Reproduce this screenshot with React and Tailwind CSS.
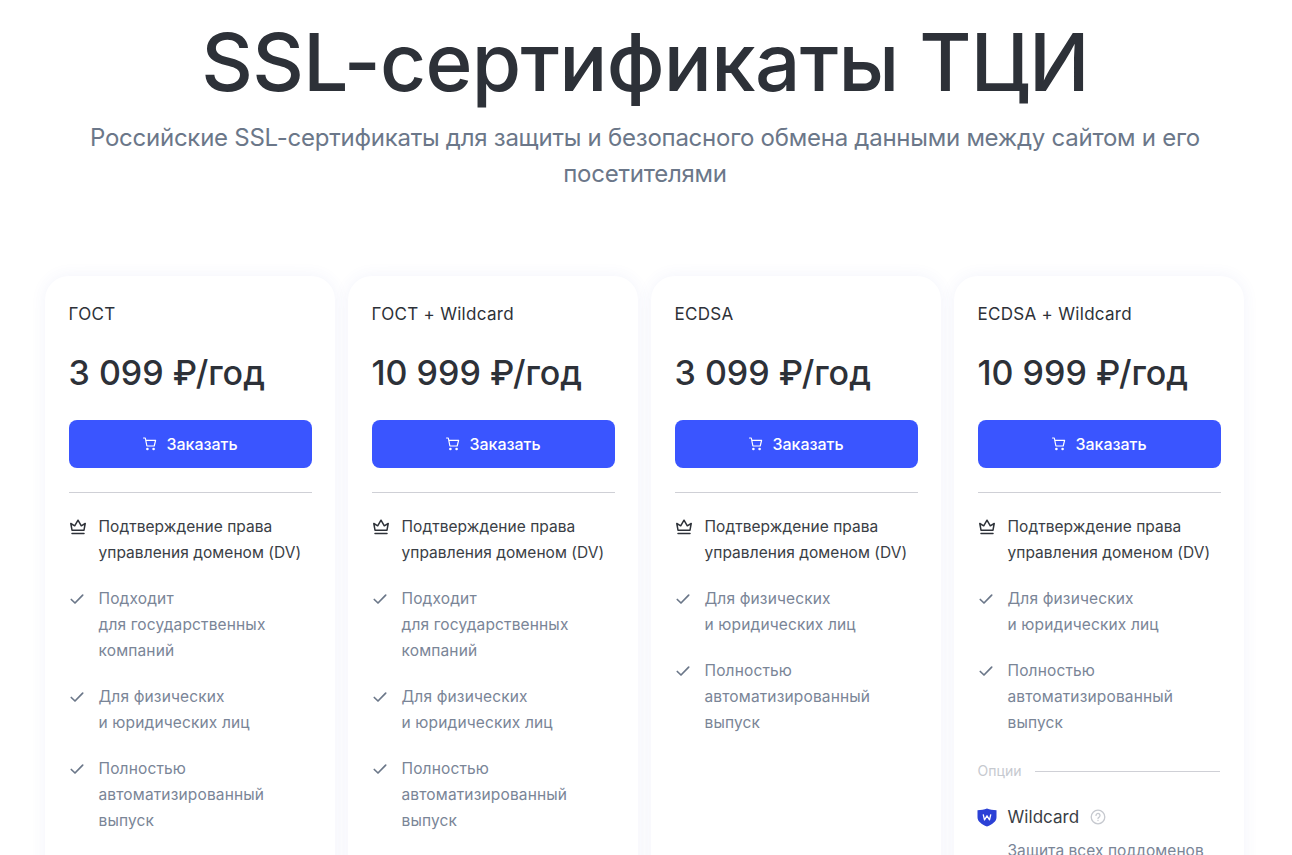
import React from 'react';

const plans = [
    {
        name: 'ГОСТ',
        price: '3 099 ₽/год',
        features: [
            ['Подходит', 'для государственных', 'компаний'],
            ['Для физических', 'и юридических лиц'],
            ['Полностью', 'автоматизированный', 'выпуск'],
        ],
    },
    {
        name: 'ГОСТ + Wildcard',
        price: '10 999 ₽/год',
        features: [
            ['Подходит', 'для государственных', 'компаний'],
            ['Для физических', 'и юридических лиц'],
            ['Полностью', 'автоматизированный', 'выпуск'],
        ],
    },
    {
        name: 'ECDSA',
        price: '3 099 ₽/год',
        features: [
            ['Для физических', 'и юридических лиц'],
            ['Полностью', 'автоматизированный', 'выпуск'],
        ],
    },
    {
        name: 'ECDSA + Wildcard',
        price: '10 999 ₽/год',
        features: [
            ['Для физических', 'и юридических лиц'],
            ['Полностью', 'автоматизированный', 'выпуск'],
        ],
        options: true,
    },
];

const CartIcon = () => (
    <svg width="16" height="16" viewBox="0 0 16 16" fill="none" stroke="currentColor" strokeWidth="1.2" strokeLinecap="round" strokeLinejoin="round">
        <path d="M1.500 2h1.800l1.600 8h7.300l1.400-5.700H3.800" />
        <circle cx="5.400" cy="13" r="0.700" />
        <circle cx="11.600" cy="13" r="0.700" />
    </svg>
);

const CrownIcon = () => (
    <svg width="18" height="18" viewBox="0 0 18 18" fill="none" stroke="#2d3138" strokeWidth="1.500" strokeLinejoin="round" strokeLinecap="round">
        <path d="M1.800 5.500l3.900 2.300L9 2.200l3.300 5.600 3.900-2.300-1.200 6.700H3z" />
        <path d="M3 15.500h12" />
    </svg>
);

const CheckIcon = () => (
    <svg width="16" height="16" viewBox="0 0 16 16" fill="none" stroke="#6b7789" strokeWidth="1.700" strokeLinecap="round" strokeLinejoin="round">
        <path d="M2.300 8.500l3.700 3.500 7.700-7.800" />
    </svg>
);

const ShieldIcon = () => (
    <svg width="20" height="19" viewBox="0 0 20 19" className="-ml-[1px]">
        <path d="M.5 2.200C4 2 7.200 1.500 10 .5c2.800 1 6 1.500 9.500 1.700v7c0 4.200-4 7-9.500 9.300C4.500 16.200.5 13.400.5 9.200z" fill="#2b41d6" />
        <path d="M6.200 6.300l1.300 5.500 2.500-4 2.500 4 1.300-5.500" fill="none" stroke="#fff" strokeWidth="1.300" strokeLinejoin="round" />
    </svg>
);

const HelpIcon = () => (
    <svg width="16" height="16" viewBox="0 0 16 16" fill="none" stroke="#c6c9cf" strokeWidth="1.300" strokeLinecap="round">
        <circle cx="8" cy="8" r="6.800" />
        <path d="M6 6.400a2 2 0 1 1 3.100 1.700c-.7.400-1.100.8-1.100 1.500" />
        <path d="M8 11.500v.1" />
    </svg>
);

const PlanCard = ({ plan }) => (
    <div className="w-[290px] shrink-0 rounded-3xl bg-white p-6 pb-10 shadow-[0_0_16px_rgba(70,90,200,0.07)]">
        <div className="mt-[2px] text-[17px] leading-6 tracking-[0.3px] text-[#2d3138]">{plan.name}</div>
        <div className="mt-[27px] text-[34px] leading-10 font-medium text-[#2d3138]">{plan.price}</div>
        <button className="mt-[27px] flex h-12 w-[243px] items-center justify-center gap-2 rounded-lg bg-[#3a55ff] text-base font-medium text-white">
            <CartIcon />
            Заказать
        </button>
        <div className="mt-6 h-px w-[243px] bg-[#cfd0d6]"></div>
        <div className="mt-[21px] flex flex-col gap-5 text-[15.5px] leading-[26px] tracking-[0.05px]">
            <div className="flex gap-[12px] text-[#3a3e45]">
                <div className="w-[18px] shrink-0 pt-1"><CrownIcon /></div>
                <div>Подтверждение права<br />управления доменом (DV)</div>
            </div>
            {plan.features.map((lines, i) => (
                <div key={i} className="flex gap-[12px] tracking-[0.15px] text-[#7a8597]">
                    <div className="w-[18px] shrink-0 pt-[5px]"><CheckIcon /></div>
                    <div>
                        {lines.map((line, j) => (
                            <div key={j}>{line}</div>
                        ))}
                    </div>
                </div>
            ))}
            {plan.options && (
                <div className="flex flex-col">
                    <div className="mt-[6px] flex items-center gap-[13px] text-sm leading-[18px] text-[#c6c9cf]">
                        Опции
                        <div className="h-px flex-1 bg-[#cfd0d6]"></div>
                    </div>
                    <div className="mt-[25px] flex items-center gap-[11px]">
                        <ShieldIcon />
                        <span className="text-[17px] leading-6 text-[#3a3e45]">Wildcard</span>
                        <HelpIcon />
                    </div>
                    <div className="mt-[9px] pl-[30px] text-[#7a8597]">Защита всех поддоменов</div>
                </div>
            )}
        </div>
    </div>
);

export default function App() {
    return (
        <div className="h-[855px] w-full overflow-hidden bg-white font-['Inter','Noto_Sans',sans-serif]">
            <div className="flex flex-col items-center pt-[14px] pr-[2px]">
                <h1 className="text-[80px] leading-[96px] font-medium tracking-[-0.7px] text-[#2d3138]">SSL-сертификаты ТЦИ</h1>
                <p className="mt-[10px] w-[1130px] text-center text-2xl leading-9 tracking-[-0.25px] text-[#6b7789]">
                    Российские SSL-сертификаты для защиты и безопасного обмена данными между сайтом и его посетителями
                </p>
            </div>
            <div className="mt-[84px] flex items-stretch gap-[13px] pl-[44.5px]">
                {plans.map(plan => (
                    <PlanCard key={plan.name} plan={plan} />
                ))}
            </div>
        </div>
    );
}
